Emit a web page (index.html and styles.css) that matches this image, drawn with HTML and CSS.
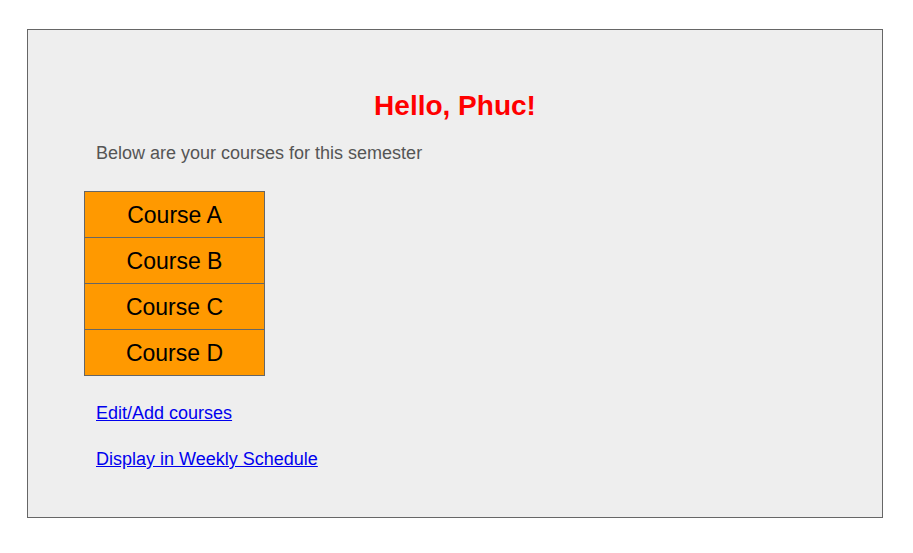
FILE: index.html
```html
<!DOCTYPE html>
<html lang="en">
<head>
<meta charset="utf-8">
<title>Courses</title>
<link rel="stylesheet" href="styles.css">
</head>
<body>
<main class="panel">
  <h1 class="greeting">Hello, Phuc!</h1>
  <p class="intro">Below are your courses for this semester</p>
  <ul class="courses">
    <li class="course">Course A</li>
    <li class="course">Course B</li>
    <li class="course">Course C</li>
    <li class="course">Course D</li>
  </ul>
  <nav class="links">
    <a class="link" href="#">Edit/Add courses</a>
    <a class="link" href="#">Display in Weekly Schedule</a>
  </nav>
</main>
</body>
</html>
```

FILE: styles.css
```css
html, body {
  margin: 0;
  padding: 0;
  background: #ffffff;
}
body {
  padding: 29px 0 0 27px;
  font-family: "Liberation Sans", Arial, sans-serif;
}
.panel {
  box-sizing: border-box;
  width: 856px;
  height: 489px;
  border: 1px solid #666666;
  background: #eeeeee;
  padding: 60px 0 0 0;
  display: flex;
  flex-direction: column;
}
.greeting {
  margin: 0;
  font-size: 28px;
  line-height: 32px;
  font-weight: bold;
  color: #ff0000;
  text-align: center;
}
.intro {
  margin: 21px 0 0 68px;
  font-size: 18px;
  line-height: 20px;
  color: #555555;
}
.courses {
  list-style: none;
  margin: 28px 0 0 56px;
  padding: 0;
  width: 181px;
  display: flex;
  flex-direction: column;
}
.course {
  box-sizing: border-box;
  height: 47px;
  border: 1px solid #666666;
  background: #ff9900;
  color: #000000;
  font-size: 23px;
  padding-top: 1px;
  display: flex;
  align-items: center;
  justify-content: center;
}
.course + .course {
  margin-top: -1px;
}
.links {
  margin: 27px 0 0 68px;
  display: flex;
  flex-direction: column;
  align-items: flex-start;
  gap: 26px;
}
.link {
  font-size: 18px;
  line-height: 20px;
  color: #0000ee;
  text-decoration: underline;
}
```
